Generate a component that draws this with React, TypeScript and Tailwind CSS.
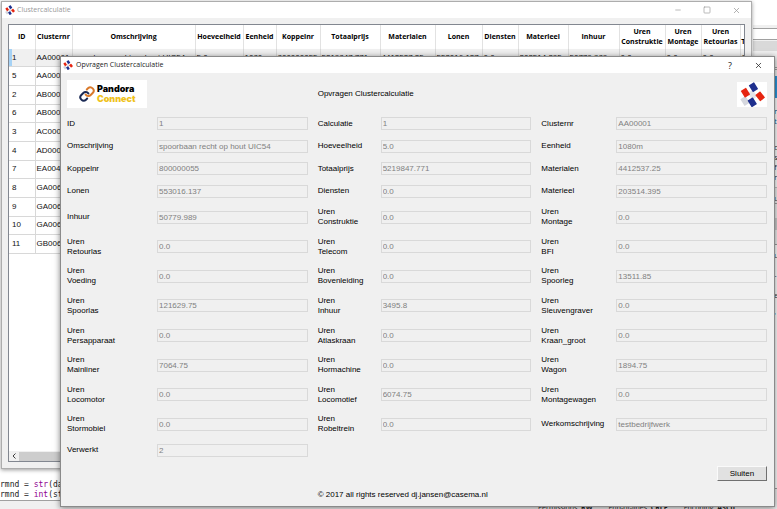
import { Minus, Square, X } from "lucide-react";

type Field = { label: string; value: string };

const fields: Field[] = [
  { label: "ID", value: "1" },
  { label: "Calculatie", value: "1" },
  { label: "Clusternr", value: "AA00001" },
  { label: "Omschrijving", value: "spoorbaan recht op hout UIC54" },
  { label: "Hoeveelheid", value: "5.0" },
  { label: "Eenheid", value: "1080m" },
  { label: "Koppelnr", value: "800000055" },
  { label: "Totaalprijs", value: "5219847.771" },
  { label: "Materialen", value: "4412537.25" },
  { label: "Lonen", value: "553016.137" },
  { label: "Diensten", value: "0.0" },
  { label: "Materieel", value: "203514.395" },
  { label: "Inhuur", value: "50779.989" },
  { label: "Uren\nConstruktie", value: "0.0" },
  { label: "Uren\nMontage", value: "0.0" },
  { label: "Uren\nRetourlas", value: "0.0" },
  { label: "Uren\nTelecom", value: "0.0" },
  { label: "Uren\nBFI", value: "0.0" },
  { label: "Uren\nVoeding", value: "0.0" },
  { label: "Uren\nBovenleiding", value: "0.0" },
  { label: "Uren\nSpoorleg", value: "13511.85" },
  { label: "Uren\nSpoorlas", value: "121629.75" },
  { label: "Uren\nInhuur", value: "3495.8" },
  { label: "Uren\nSleuvengraver", value: "0.0" },
  { label: "Uren\nPersapparaat", value: "0.0" },
  { label: "Uren\nAtlaskraan", value: "0.0" },
  { label: "Uren\nKraan_groot", value: "0.0" },
  { label: "Uren\nMainliner", value: "7064.75" },
  { label: "Uren\nHormachine", value: "0.0" },
  { label: "Uren\nWagon", value: "1894.75" },
  { label: "Uren\nLocomotor", value: "0.0" },
  { label: "Uren\nLocomotief", value: "6074.75" },
  { label: "Uren\nMontagewagen", value: "0.0" },
  { label: "Uren\nStormobiel", value: "0.0" },
  { label: "Uren\nRobeltrein", value: "0.0" },
  { label: "Werkomschrijving", value: "testbedrijfwerk" },
  { label: "Verwerkt", value: "2" },
];

const columns = [
  { name: "ID", width: "w-[26px]" },
  { name: "Clusternr", width: "w-[37px]" },
  { name: "Omschrijving", width: "w-[123px]" },
  { name: "Hoeveelheid", width: "w-[48px]" },
  { name: "Eenheid", width: "w-[33px]" },
  { name: "Koppelnr", width: "w-[44px]" },
  { name: "Totaalprijs", width: "w-[60px]" },
  { name: "Materialen", width: "w-[55px]" },
  { name: "Lonen", width: "w-[47px]" },
  { name: "Diensten", width: "w-[36px]" },
  { name: "Materieel", width: "w-[50px]" },
  { name: "Inhuur", width: "w-[51px]" },
  { name: "Uren\nConstruktie", width: "w-[46px]" },
  { name: "Uren\nMontage", width: "w-[36px]" },
  { name: "Uren\nRetourlas", width: "w-[39px]" },
  { name: "Uren\nTelecom", width: "w-[32px]" },
];

const rows: string[][] = [
  ["1", "AA00001", "spoorbaan recht op hout UIC54", "5.0", "1080m", "800000055", "5219847.771", "4412537.25", "553016.137", "0.0", "203514.395", "50779.989", "0.0", "0.0", "0.0", "0.0"],
  ["5", "AA00002"],
  ["2", "AB00001"],
  ["6", "AB00002"],
  ["3", "AC00001"],
  ["4", "AD00001"],
  ["7", "EA00401"],
  ["8", "GA00601"],
  ["9", "GA00602"],
  ["10", "GA00603"],
  ["11", "GB00601"],
];

const formGrid =
  "grid grid-cols-[80px_minmax(0,1fr)_53px_minmax(0,1fr)_65px_minmax(0,1fr)] gap-x-[10px]";

function BlocksLogo({ className }: { className: string }) {
  return (
    <svg viewBox="3 0 25 25" className={className} aria-hidden="true">
      <rect x="12.5" y="8.8" width="6" height="8" fill="#e3e4ea" transform="rotate(-32 15.5 12.8)" />
      <rect x="5" y="15" width="6" height="8" fill="#d5d7de" transform="rotate(-32 8 19)" />
      <rect x="13.3" y="1.2" width="6.2" height="8" rx="0.5" fill="#1e2f8e" transform="rotate(-32 16.4 5.2)" />
      <rect x="5.3" y="6.7" width="6.2" height="8" rx="0.5" fill="#e62410" transform="rotate(-32 8.4 10.7)" />
      <rect x="20.1" y="10.3" width="6.2" height="8" rx="0.5" fill="#e62410" transform="rotate(-38 23.2 14.3)" />
      <rect x="12.2" y="16.3" width="6.2" height="8" rx="0.5" fill="#1e2f8e" transform="rotate(-32 15.3 20.3)" />
    </svg>
  );
}

function PandoraLogo() {
  return (
    <div className="flex h-7 w-20 items-center bg-white pl-3">
      <svg viewBox="0 0 24 24" className="size-4" fill="none" strokeWidth="3" strokeLinecap="round" aria-hidden="true">
        <path stroke="#d9792b" d="M10 13a5 5 0 0 0 7.54.54l3-3a5 5 0 0 0-7.07-7.07l-1.72 1.71" />
        <path stroke="#1b2a55" d="M14 11a5 5 0 0 0-7.54-.54l-3 3a5 5 0 0 0 7.07 7.07l1.71-1.71" />
      </svg>
      <div className="ml-0.5 font-['Inter',sans-serif] text-[9px] leading-[10px] font-black">
        <div className="text-black">Pandora</div>
        <div className="text-[#efc21a]">Connect</div>
      </div>
    </div>
  );
}

function Backdrop() {
  return (
    <div className="absolute inset-0 flex bg-white" aria-hidden="true">
      <div className="flex flex-1 flex-col justify-end overflow-hidden">
        <pre className="font-['DejaVu_Sans_Mono',monospace] text-[8px] leading-[10px] text-[#222]">
          rmnd = <span className="text-[#900090]">str</span>(data){"\n"}rmnd = <span className="text-[#900090]">int</span>(str(
        </pre>
        <div className="flex h-[9px] items-start justify-end gap-4 border-t border-[#a0a0a0] bg-[#f0f0f0] pt-px pr-[18px] font-['Open_Sans',sans-serif] text-[7px] leading-3 whitespace-nowrap text-[#222]">
          <span>Permissions: <b>RW</b></span>
          <span>End-of-lines: <b>CRLF</b></span>
          <span>Encoding: <b>ASCII</b></span>
        </div>
      </div>
      <div className="flex w-6 flex-col overflow-hidden bg-[#f0f0f0] pb-5">
        <div className="h-[25px] shrink-0 bg-white" />
        <div className="mt-[3px] h-3 shrink-0 border-y border-[#a0a0a0] bg-white" />
        <div className="mt-px h-[10px] shrink-0 bg-[#d9d9d9]" />
        <div className="mt-4 h-[3px] shrink-0 border-y border-[#a0a0a0]" />
        <div className="mt-1.5 h-[22px] shrink-0 bg-[#2c97dc]" />
        <div className="h-[90px] shrink-0 border-b border-[#c4c4c4] bg-white pt-2 pl-[21px] font-['Open_Sans',sans-serif] text-[8px] leading-[10px] text-[#333]">
          <div className="text-[#1b5f93]">n</div>
          <div className="text-[#1b5f93]">t</div>
          <div className="mt-4">o</div>
          <div>s</div>
          <div>f</div>
          <div>r</div>
        </div>
        <div className="h-4 shrink-0 border-b border-[#a0a0a0] pl-[21px] font-['Open_Sans',sans-serif] text-[8px] leading-5 text-[#333]">u</div>
        <div className="mt-[14px] h-3 shrink-0 bg-[#cfcfcf]" />
        <div className="mt-[14px] flex-1 border-y border-[#a0a0a0] bg-white pl-[21px] font-['Open_Sans',sans-serif] text-[8px] leading-5 text-[#333]">
          <div>u</div>
          <div>-</div>
          <div>e</div>
          <div className="text-[#2050a0]">'</div>
        </div>
      </div>
    </div>
  );
}

function ClusterWindow() {
  return (
    <section className="absolute top-px right-[25px] bottom-10 left-px flex flex-col border border-[#adadad] bg-[#f0f0f0] shadow-[0_1px_4px_rgba(0,0,0,0.4)]">
      <header className="flex h-4 items-center bg-white pr-[10px] pl-[3px] text-[#999]">
        <BlocksLogo className="size-[10px]" />
        <h1 className="ml-0.5 flex-1 font-['Open_Sans',sans-serif] text-[7px]">Clustercalculatie</h1>
        <div className="flex items-center gap-[21px]">
          <button aria-label="Minimaliseren"><Minus className="size-2" strokeWidth={2} /></button>
          <button aria-label="Maximaliseren"><Square className="size-2" strokeWidth={2} /></button>
          <button aria-label="Sluiten"><X className="size-[9px]" strokeWidth={2} /></button>
        </div>
      </header>
      <div className="mx-1.5 mt-1.5 mb-1.5 flex min-h-0 flex-1 flex-col overflow-hidden border border-[#828790] bg-white">
        <div className="flex-1 overflow-hidden">
          <table className="h-[229px] w-[763px] table-fixed border-collapse">
            <thead>
              <tr className="h-6">
                {columns.map((c) => (
                  <th key={c.name} className={`${c.width} border-r border-[#e2e2e2] p-0 font-['Open_Sans',sans-serif] text-[7px] leading-[10px] font-bold whitespace-pre text-black`}>
                    {c.name}
                  </th>
                ))}
              </tr>
            </thead>
            <tbody>
              {rows.map((row, r) => (
                <tr key={row[0]} className={r === 0 ? "bg-[#f0f0f0]" : "bg-white"}>
                  {columns.map((c, i) => (
                    <td
                      key={c.name}
                      className={`overflow-hidden border-r border-b border-[#d8d8d8] p-0 text-[8px] leading-[10px] whitespace-nowrap text-[#111] ${i === 0 ? "pl-[3px]" : "pl-px"} ${r === 0 && i === 0 ? "bg-linear-to-r from-[#a6d2f5] from-[3px] to-[#f0f0f0] to-[3px]" : ""}`}
                    >
                      {row[i] ?? ""}
                    </td>
                  ))}
                </tr>
              ))}
            </tbody>
          </table>
        </div>
        <div className="flex h-[10px] items-center bg-[#f0f0f0] pl-[3px]">
          <svg viewBox="0 0 4 6" className="h-1.5 w-1" fill="none" stroke="#404040" aria-hidden="true">
            <path d="M3.5 0.5 1 3l2.5 2.5" />
          </svg>
          <div className="ml-[3px] h-[9px] w-1/2 bg-[#cdcdcd]" />
        </div>
      </div>
    </section>
  );
}

function DetailDialog() {
  return (
    <section
      role="dialog"
      aria-labelledby="dialog-title"
      className="absolute top-14 right-0.5 left-[60px] border border-[#8a8a8a] bg-[#f0f0f0] shadow-[0_1px_6px_rgba(0,0,0,0.5)]"
    >
      <header className="flex h-4 items-center bg-white pr-[11px] pl-0.5 text-[#222]">
        <BlocksLogo className="size-[10px]" />
        <h2 id="dialog-title" className="ml-[3px] flex-1 font-['Open_Sans',sans-serif] text-[7px]">
          Opvragen Clustercalculatie
        </h2>
        <div className="flex items-center gap-[22px]">
          <button aria-label="Help" className="font-['Open_Sans',sans-serif] text-[9px] leading-none">?</button>
          <button aria-label="Venster sluiten"><X className="size-[9px]" strokeWidth={2} /></button>
        </div>
      </header>
      <div className="pt-[7px] pr-[7px] pb-1.5 pl-1.5 text-[8px] leading-[10px] text-black">
        <div className={`${formGrid} items-center`}>
          <div className="col-span-2"><PandoraLogo /></div>
          <div className="col-span-2">Opvragen Clustercalculatie</div>
          <div className="col-span-2 flex justify-end">
            <div className="flex h-[25px] w-[30px] justify-center bg-white">
              <BlocksLogo className="h-[25px] w-[25px]" />
            </div>
          </div>
        </div>
        <form id="detail-form" className={`${formGrid} mt-[9px] min-h-[340px] items-center gap-y-[9px]`}>
          {fields.map((f, i) => (
            <div key={f.label} className="contents">
              <label htmlFor={`field-${i}`} className="whitespace-pre">{f.label}</label>
              <input
                id={`field-${i}`}
                disabled
                defaultValue={f.value}
                className="h-[13px] w-full min-w-0 border border-[#d9d9d9] bg-[#f0f0f0] px-px leading-[10px] text-[#808080]"
              />
            </div>
          ))}
        </form>
        <div className="mt-[9px] flex justify-end">
          <button className="h-[15px] w-[50px] border border-t-[#fafafa] border-r-[#707070] border-b-[#707070] border-l-[#fafafa] bg-[#e1e1e1]">
            Sluiten
          </button>
        </div>
        <div className={`${formGrid} mt-[9px]`}>
          <p className="col-span-4 col-start-3">© 2017 all rights reserved dj.jansen@casema.nl</p>
        </div>
      </div>
    </section>
  );
}

export default function App() {
  return (
    <main className="relative h-screen min-h-[509px] overflow-hidden bg-white font-['Liberation_Sans',Arial,sans-serif]">
      <Backdrop />
      <ClusterWindow />
      <DetailDialog />
    </main>
  );
}
